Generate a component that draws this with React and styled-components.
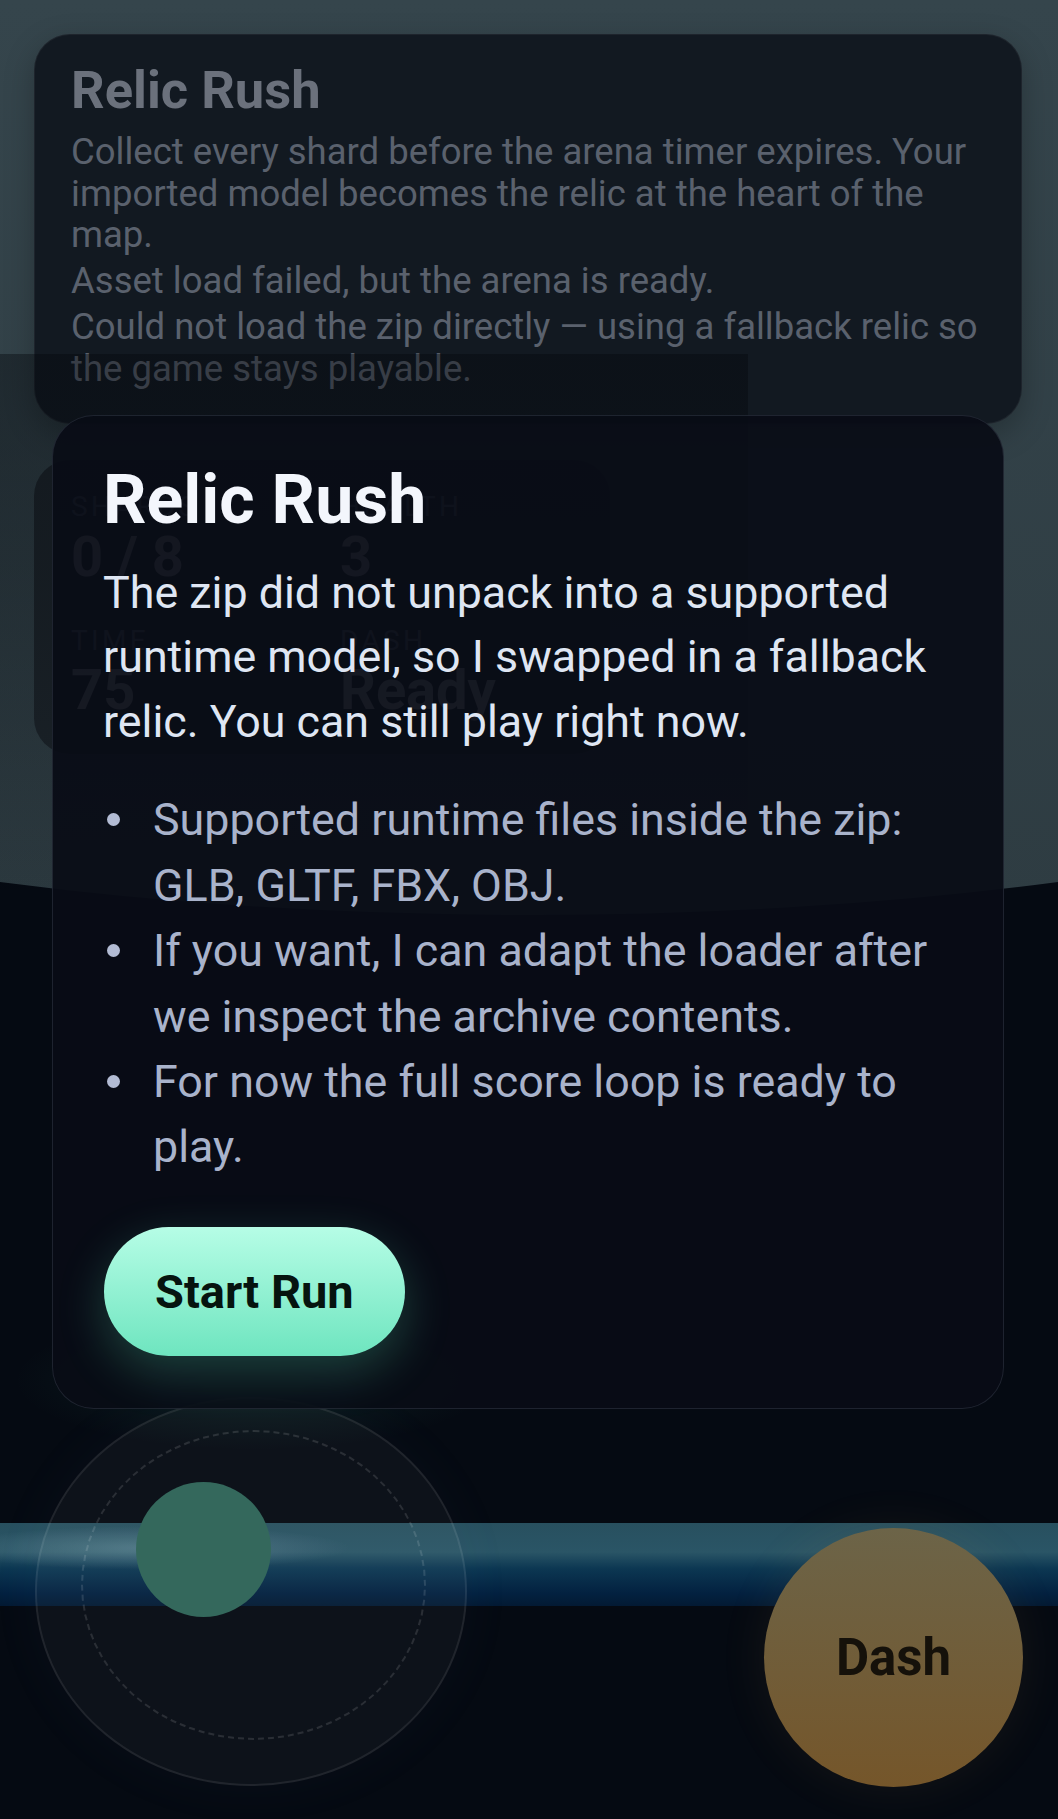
import React from 'react';
import styled, { createGlobalStyle } from 'styled-components';

const GlobalStyle = createGlobalStyle`
  html, body {
    margin: 0;
    padding: 0;
    background: #050a12;
  }
  body {
    font-family: Roboto, "Noto Sans", "Liberation Sans", Arial, sans-serif;
    -webkit-font-smoothing: antialiased;
  }
  *, *::before, *::after { box-sizing: border-box; }
`;

const Stage = styled.div`
  position: relative;
  width: 100%;
  height: 1819px;
  overflow: hidden;
  background: #050a12;
`;

const Backdrop = styled.svg`
  position: absolute;
  left: 0;
  top: 0;
  width: 100%;
  height: 100%;
`;

const Hud = styled.div`
  position: relative;
  display: flex;
  flex-direction: column;
  align-items: flex-start;
  padding: 34px 36px 0 34px;
`;

const InfoCard = styled.section`
  align-self: stretch;
  background: #121921;
  border: 1px solid rgba(255, 255, 255, 0.05);
  border-radius: 36px;
  padding: 25px 26px 34px 36px;
  box-shadow: 0 10px 30px rgba(0, 0, 0, 0.25);
`;

const InfoTitle = styled.h1`
  margin: 0 0 11px;
  font-size: 52.5px;
  line-height: 1.15;
  font-weight: 700;
  color: #6b717c;
`;

const InfoText = styled.p`
  margin: ${(p) => (p.$gap ? `${p.$gap}px 0 0` : '0')};
  font-size: 36.5px;
  line-height: 41.5px;
  color: #5a616d;
`;

const StatsPanel = styled.div`
  margin-top: 36px;
  width: 576px;
  background: #1d252b;
  border-radius: 36px;
  padding: 30px 37px 32px;
  display: grid;
  grid-template-columns: 1fr 1fr;
  column-gap: 36px;
  row-gap: 35px;
`;

const Stat = styled.div`
  display: flex;
  flex-direction: column;
  gap: 3px;
`;

const StatLabel = styled.span`
  font-size: 28px;
  line-height: 33.6px;
  letter-spacing: 0.12em;
  text-transform: uppercase;
  color: #8a94a3;
`;

const StatValue = styled.span`
  font-size: 56px;
  line-height: 61.6px;
  font-weight: 700;
  color: #eef3f9;
`;

const Scrim = styled.div`
  position: absolute;
  left: 0;
  top: 354px;
  width: 748px;
  height: 536px;
  background: linear-gradient(180deg, rgba(3, 6, 11, 0.4) 0%, rgba(3, 6, 11, 0.3) 40%, rgba(3, 6, 11, 0.08) 100%);
  pointer-events: none;
`;

const Joystick = styled.div`
  position: absolute;
  left: 35px;
  top: 1397px;
  width: 432px;
  height: 389px;
  border-radius: 50%;
  border: 2px solid rgba(255, 255, 255, 0.08);
  background: rgba(255, 255, 255, 0.035);
  box-shadow: 0 0 60px rgba(120, 160, 200, 0.04);
`;

const JoystickRing = styled.div`
  position: absolute;
  left: 44px;
  top: 31px;
  width: 345px;
  height: 310px;
  border-radius: 50%;
  border: 2px dashed rgba(255, 255, 255, 0.12);
`;

const JoystickKnob = styled.div`
  position: absolute;
  left: 99px;
  top: 83px;
  width: 135px;
  height: 135px;
  border-radius: 50%;
  background: #34685c;
`;

const DashButton = styled.button`
  position: absolute;
  left: 764px;
  top: 1528px;
  width: 259px;
  height: 259px;
  border-radius: 50%;
  border: none;
  padding: 0;
  background: linear-gradient(180deg, #6c6448 0%, #75562a 100%);
  box-shadow: 0 0 50px rgba(230, 170, 80, 0.08);
  font-family: inherit;
  font-size: 51px;
  font-weight: 700;
  color: #15110a;
`;

const Modal = styled.div`
  position: absolute;
  left: 52px;
  top: 415px;
  width: 952px;
  background: rgba(9, 12, 21, 0.93);
  border: 1px solid rgba(148, 163, 184, 0.16);
  border-radius: 42px;
  padding: 47px 52px 52px 50px;
`;

const ModalTitle = styled.h2`
  margin: 0 0 23px;
  font-size: 68px;
  line-height: 1.1;
  font-weight: 700;
  color: #f3f6fc;
`;

const ModalText = styled.p`
  margin: 0;
  font-size: 44.8px;
  line-height: 64.5px;
  color: #dfe6f3;
`;

const Notes = styled.ul`
  margin: 33px 0 0;
  padding: 0;
  list-style: none;
  font-size: 44.8px;
  line-height: 65.4px;
  color: #a9b3cb;
`;

const Note = styled.li`
  position: relative;
  padding-left: 50px;

  &::before {
    content: '';
    position: absolute;
    left: 4px;
    top: 26px;
    width: 13px;
    height: 13px;
    border-radius: 50%;
    background: #b3bcd4;
  }
`;

const StartButton = styled.button`
  display: block;
  margin: 47.6px 0 0 1px;
  height: 129px;
  padding: 0 51px;
  border: none;
  border-radius: 999px;
  background: linear-gradient(180deg, #b6fde6 0%, #6ee5bf 100%);
  box-shadow: 0 16px 48px rgba(94, 234, 183, 0.24);
  font-family: inherit;
  font-size: 47px;
  font-weight: 700;
  color: #06140f;
`;

function SceneBackdrop() {
  return (
    <Backdrop viewBox="0 0 1058 1819" preserveAspectRatio="none">
      <defs>
        <linearGradient id="sky" x1="0" y1="0" x2="0" y2="1">
          <stop offset="0" stopColor="#35454c" />
          <stop offset="1" stopColor="#2e3c42" />
        </linearGradient>
        <linearGradient id="beam" x1="0" y1="0" x2="0" y2="1">
          <stop offset="0" stopColor="#28505f" />
          <stop offset="0.35" stopColor="#2a5566" />
          <stop offset="0.55" stopColor="#0c3752" />
          <stop offset="0.85" stopColor="#032140" />
          <stop offset="1" stopColor="#031a33" />
        </linearGradient>
        <radialGradient id="shine" cx="0.5" cy="0.5" r="0.5">
          <stop offset="0" stopColor="#8fb4bf" stopOpacity="0.35" />
          <stop offset="1" stopColor="#8fb4bf" stopOpacity="0" />
        </radialGradient>
        <radialGradient id="mintGlow" cx="0.5" cy="0.5" r="0.5">
          <stop offset="0" stopColor="#3fbf95" stopOpacity="0.12" />
          <stop offset="1" stopColor="#3fbf95" stopOpacity="0" />
        </radialGradient>
      </defs>
      <rect x="0" y="0" width="1058" height="1819" fill="#050a12" />
      <path d="M0 0 H1058 V882 A1200 322 0 0 1 0 882 Z" fill="url(#sky)" />
      <rect x="0" y="1523" width="1058" height="83" fill="url(#beam)" />
      <ellipse cx="150" cy="1548" rx="200" ry="22" fill="url(#shine)" />
      <ellipse cx="254" cy="1380" rx="240" ry="70" fill="url(#mintGlow)" />
    </Backdrop>
  );
}

export default function App() {
  return (
    <>
      <GlobalStyle />
      <Stage>
        <SceneBackdrop />
        <Hud>
          <InfoCard>
            <InfoTitle>Relic Rush</InfoTitle>
            <InfoText>
              Collect every shard before the arena timer expires. Your imported model becomes the relic at the heart of the map.
            </InfoText>
            <InfoText $gap={4}>Asset load failed, but the arena is ready.</InfoText>
            <InfoText $gap={5}>
              Could not load the zip directly — using a fallback relic so the game stays playable.
            </InfoText>
          </InfoCard>
          <StatsPanel>
            <Stat>
              <StatLabel>Shards</StatLabel>
              <StatValue>0 / 8</StatValue>
            </Stat>
            <Stat>
              <StatLabel>Health</StatLabel>
              <StatValue>3</StatValue>
            </Stat>
            <Stat>
              <StatLabel>Time</StatLabel>
              <StatValue>75</StatValue>
            </Stat>
            <Stat>
              <StatLabel>Dash</StatLabel>
              <StatValue>Ready</StatValue>
            </Stat>
          </StatsPanel>
        </Hud>
        <Scrim />
        <Joystick>
          <JoystickRing />
          <JoystickKnob />
        </Joystick>
        <DashButton type="button">Dash</DashButton>
        <Modal role="dialog" aria-modal="true">
          <ModalTitle>Relic Rush</ModalTitle>
          <ModalText>
            The zip did not unpack into a supported runtime model, so I swapped in a fallback relic. You can still play right now.
          </ModalText>
          <Notes>
            <Note>Supported runtime files inside the zip: GLB, GLTF, FBX, OBJ.</Note>
            <Note>If you want, I can adapt the loader after we inspect the archive contents.</Note>
            <Note>For now the full score loop is ready to play.</Note>
          </Notes>
          <StartButton type="button">Start Run</StartButton>
        </Modal>
      </Stage>
    </>
  );
}
